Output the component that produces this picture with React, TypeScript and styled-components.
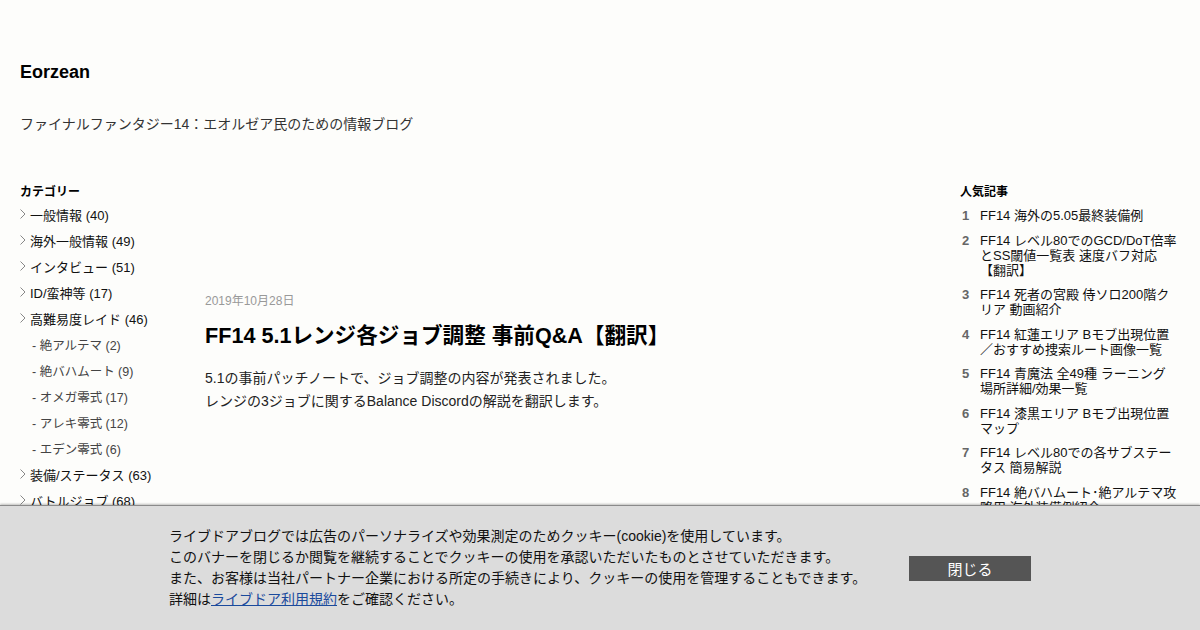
import React from "react";
import styled, { createGlobalStyle } from "styled-components";

const GlobalStyle = createGlobalStyle`
    body {
        margin: 0;
        background: #fdfdfb;
        font-family: "Liberation Sans", "Noto Sans CJK JP", sans-serif;
        color: #111;
    }
`;

const Page = styled.div`
    width: 1200px;
    height: 630px;
    overflow: hidden;
    position: relative;
`;

const Header = styled.header`
    padding: 60px 20px 0;
`;

const BlogTitle = styled.h1`
    margin: 0;
    font-size: 18px;
    line-height: 24px;
    font-weight: bold;
    color: #000;
`;

const BlogDesc = styled.p`
    margin: 30px 0 0;
    font-size: 14px;
    line-height: 20px;
    color: #333;
`;

const Columns = styled.div`
    display: flex;
    margin-top: 50px;
    padding: 0 20px;
`;

const LeftSide = styled.aside`
    width: 165px;
    flex-shrink: 0;
`;

const Main = styled.main`
    flex: 1;
    padding: 109px 20px 0;
`;

const RightSide = styled.aside`
    width: 220px;
    flex-shrink: 0;
`;

const SideHeading = styled.h2`
    margin: 0 0 1px;
    font-size: 12px;
    line-height: 16px;
    font-weight: bold;
    color: #000;
`;

const CatList = styled.ul`
    list-style: none;
    margin: 0;
    padding: 0;
`;

const CatItem = styled.li<{ $sub?: boolean }>`
    display: flex;
    align-items: center;
    gap: 4px;
    height: 26px;
    font-size: ${(p) => (p.$sub ? "12.5px" : "13px")};
    color: ${(p) => (p.$sub ? "#444" : "#111")};
    padding-left: ${(p) => (p.$sub ? "12px" : "0")};
    white-space: nowrap;
`;

const Chevron = () => (
    <svg width="6" height="10" viewBox="0 0 6 10">
        <polyline points="0.5,0.5 5,5 0.5,9.5" fill="none" stroke="#888" strokeWidth="1" />
    </svg>
);

const PostDate = styled.div`
    font-size: 12px;
    line-height: 16px;
    color: #999;
`;

const PostTitle = styled.h2`
    margin: 13px 0 0;
    font-size: 21.6px;
    line-height: 28px;
    font-weight: bold;
    color: #000;
`;

const PostBody = styled.p`
    margin: 17px 0 0;
    font-size: 14px;
    line-height: 23px;
    color: #222;
`;

const RankList = styled.ol`
    list-style: none;
    margin: 8px 0 0;
    padding: 0;
`;

const RankItem = styled.li`
    display: flex;
    margin-bottom: 9.5px;
    font-size: 13px;
    line-height: 15px;
    color: #111;
`;

const RankNum = styled.span`
    width: 20px;
    flex-shrink: 0;
    padding-left: 2px;
    box-sizing: border-box;
    font-weight: bold;
    color: #666;
`;

const RankText = styled.span`
    width: 197.5px;
`;

const Banner = styled.div`
    position: absolute;
    left: 0;
    right: 0;
    bottom: 0;
    height: 124px;
    background: #dcdcdc;
    border-top: 1px solid #8a8a8a;
    box-shadow: 0 -1px 2px rgba(0, 0, 0, 0.25);
    display: flex;
    align-items: center;
    justify-content: center;
    gap: 42px;
`;

const BannerText = styled.div`
    width: 698px;
    font-size: 14px;
    line-height: 21px;
    color: #111;
    white-space: nowrap;
`;

const BannerLink = styled.a`
    color: #1a4a9c;
    text-decoration: underline;
`;

const CloseButton = styled.button`
    width: 122px;
    height: 25px;
    border: none;
    background: #555;
    color: #fff;
    font-family: inherit;
    font-size: 15px;
    padding: 0;
    cursor: pointer;
`;

const categories = [
    { name: "一般情報", count: 40 },
    { name: "海外一般情報", count: 49 },
    { name: "インタビュー", count: 51 },
    { name: "ID/蛮神等", count: 17 },
    { name: "高難易度レイド", count: 46 },
    { name: "- 絶アルテマ", count: 2, sub: true },
    { name: "- 絶バハムート", count: 9, sub: true },
    { name: "- オメガ零式", count: 17, sub: true },
    { name: "- アレキ零式", count: 12, sub: true },
    { name: "- エデン零式", count: 6, sub: true },
    { name: "装備/ステータス", count: 63 },
    { name: "バトルジョブ", count: 68 },
];

const ranking = [
    "FF14 海外の5.05最終装備例",
    "FF14 レベル80でのGCD/DoT倍率とSS閾値一覧表 速度バフ対応【翻訳】",
    "FF14 死者の宮殿 侍ソロ200階クリア 動画紹介",
    "FF14 紅蓮エリア Bモブ出現位置／おすすめ捜索ルート画像一覧",
    "FF14 青魔法 全49種 ラーニング場所詳細/効果一覧",
    "FF14 漆黒エリア Bモブ出現位置マップ",
    "FF14 レベル80での各サブステータス 簡易解説",
    "FF14 絶バハムート･絶アルテマ攻略用 海外装備例紹介",
];

const App = () => {
    return (
        <Page>
            <GlobalStyle />
            <Header>
                <BlogTitle>Eorzean</BlogTitle>
                <BlogDesc>ファイナルファンタジー14：エオルゼア民のための情報ブログ</BlogDesc>
            </Header>
            <Columns>
                <LeftSide>
                    <SideHeading>カテゴリー</SideHeading>
                    <CatList>
                        {categories.map((c) => (
                            <CatItem key={c.name} $sub={c.sub}>
                                {!c.sub && <Chevron />}
                                <span>
                                    {c.name} ({c.count})
                                </span>
                            </CatItem>
                        ))}
                    </CatList>
                </LeftSide>
                <Main>
                    <PostDate>2019年10月28日</PostDate>
                    <PostTitle>FF14 5.1レンジ各ジョブ調整 事前Q&amp;A【翻訳】</PostTitle>
                    <PostBody>
                        5.1の事前パッチノートで、ジョブ調整の内容が発表されました。
                        <br />
                        レンジの3ジョブに関するBalance Discordの解説を翻訳します。
                    </PostBody>
                </Main>
                <RightSide>
                    <SideHeading>人気記事</SideHeading>
                    <RankList>
                        {ranking.map((r, i) => (
                            <RankItem key={r}>
                                <RankNum>{i + 1}</RankNum>
                                <RankText>{r}</RankText>
                            </RankItem>
                        ))}
                    </RankList>
                </RightSide>
            </Columns>
            <Banner>
                <BannerText>
                    ライブドアブログでは広告のパーソナライズや効果測定のためクッキー(cookie)を使用しています。
                    <br />
                    このバナーを閉じるか閲覧を継続することでクッキーの使用を承認いただいたものとさせていただきます。
                    <br />
                    また、お客様は当社パートナー企業における所定の手続きにより、クッキーの使用を管理することもできます。
                    <br />
                    詳細は<BannerLink href="#">ライブドア利用規約</BannerLink>をご確認ください。
                </BannerText>
                <CloseButton>閉じる</CloseButton>
            </Banner>
        </Page>
    );
};

export default App;
